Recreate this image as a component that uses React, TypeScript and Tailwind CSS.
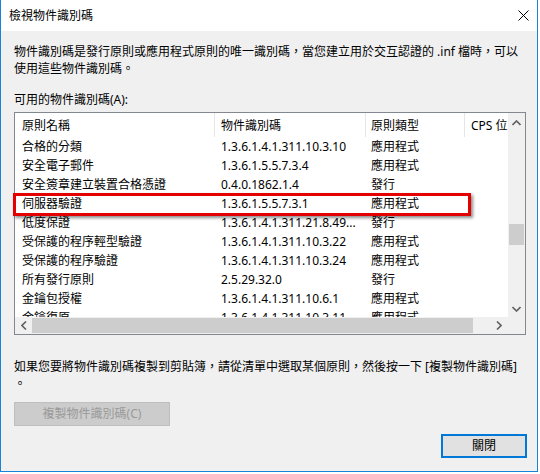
import React from "react";

const rows: [string, string, string][] = [
  ["合格的分類", "1.3.6.1.4.1.311.10.3.10", "應用程式"],
  ["安全電子郵件", "1.3.6.1.5.5.7.3.4", "應用程式"],
  ["安全簽章建立裝置合格憑證", "0.4.0.1862.1.4", "發行"],
  ["伺服器驗證", "1.3.6.1.5.5.7.3.1", "應用程式"],
  ["低度保證", "1.3.6.1.4.1.311.21.8.49...", "發行"],
  ["受保護的程序輕型驗證", "1.3.6.1.4.1.311.10.3.22", "應用程式"],
  ["受保護的程序驗證", "1.3.6.1.4.1.311.10.3.24", "應用程式"],
  ["所有發行原則", "2.5.29.32.0", "發行"],
  ["金鑰包授權", "1.3.6.1.4.1.311.10.6.1", "應用程式"],
  ["金鑰復原", "1.3.6.1.4.1.311.10.3.11", "應用程式"],
];

const Chevron = ({ dir }: { dir: "up" | "down" | "left" | "right" }) => {
  const pts: Record<string, string> = {
    up: "0.5,5 4.5,1 8.5,5",
    down: "0.5,1 4.5,5 8.5,1",
    left: "5,0.5 1,4.5 5,8.5",
    right: "1,0.5 5,4.5 1,8.5",
  };
  const vertical = dir === "up" || dir === "down";
  return (
    <svg width={vertical ? 9 : 6} height={vertical ? 6 : 9} viewBox={vertical ? "0 0 9 6" : "0 0 6 9"}>
      <polyline points={pts[dir]} fill="none" stroke="#606060" strokeWidth="1.6" />
    </svg>
  );
};

export default function App() {
  return (
    <div
      className="w-[540px] h-[474px] bg-white text-black text-[12px]"
      style={{ fontFamily: '"Noto Sans", "Noto Sans CJK TC", sans-serif' }}
    >
      <div className="w-[538px] h-[472px] border-x border-b border-[#1883d7] flex flex-col bg-[#f0f0f0]">
        {/* Title bar */}
        <div className="h-[31px] shrink-0 bg-white flex items-center justify-between pl-[8px] pr-[8px]">
          <span className="leading-[17px]">檢視物件識別碼</span>
          <svg width="11" height="11" viewBox="0 0 11 11">
            <line x1="0.5" y1="0.5" x2="10.5" y2="10.5" stroke="#000" strokeWidth="1" />
            <line x1="10.5" y1="0.5" x2="0.5" y2="10.5" stroke="#000" strokeWidth="1" />
          </svg>
        </div>

        {/* Body */}
        <div className="flex-1 flex flex-col px-[13px] pt-[12px]">
          <div className="leading-[17px] whitespace-nowrap">
            <div>物件識別碼是發行原則或應用程式原則的唯一識別碼，當您建立用於交互認證的 .inf 檔時，可以</div>
            <div>使用這些物件識別碼。</div>
          </div>

          <div className="mt-[14px] leading-[17px]">可用的物件識別碼(A):</div>

          {/* List view */}
          <div className="mt-[4px] w-[512px] h-[223px] border border-[#828790] bg-white relative flex">
            <div className="w-[493px] flex flex-col">
              <div className="h-[204px] overflow-hidden">
                <div className="h-[24px] flex whitespace-nowrap">
                  <div className="w-[200px] shrink-0 border-r border-[#e5e5e5] pl-[7px] pt-[3px] leading-[20px]">原則名稱</div>
                  <div className="w-[151px] shrink-0 border-r border-[#e5e5e5] pl-[6px] pt-[3px] leading-[20px]">物件識別碼</div>
                  <div className="w-[99px] shrink-0 border-r border-[#e5e5e5] pl-[5px] pt-[3px] leading-[20px]">原則類型</div>
                  <div className="flex-1 pl-[6px] pt-[3px] leading-[20px] overflow-hidden">CPS 位</div>
                </div>
                {rows.map((r, i) => (
                  <div key={i} className="h-[19px] flex whitespace-nowrap leading-[19px]">
                    <div className="w-[200px] shrink-0 pl-[7px]">{r[0]}</div>
                    <div className="w-[151px] shrink-0 pl-[6px]">{r[1]}</div>
                    <div className="w-[99px] shrink-0 pl-[5px]">{r[2]}</div>
                    <div className="flex-1" />
                  </div>
                ))}
              </div>
              {/* Horizontal scrollbar */}
              <div className="h-[17px] bg-[#f0f0f0] flex items-center">
                <div className="w-[17px] h-[17px] flex items-center justify-center">
                  <Chevron dir="left" />
                </div>
                <div className="w-[441px] h-[15px] bg-[#cdcdcd]" />
                <div className="flex-1 h-[17px] flex items-center justify-end pr-[6px]">
                  <Chevron dir="right" />
                </div>
              </div>
            </div>
            {/* Vertical scrollbar */}
            <div className="w-[17px] flex flex-col">
              <div className="h-[204px] bg-[#f0f0f0] flex flex-col">
                <div className="h-[19px] flex items-center justify-center pt-[1px]">
                  <Chevron dir="up" />
                </div>
                <div className="mt-[92px] ml-[1px] w-[15px] h-[21px] bg-[#cdcdcd]" />
                <div className="flex-1" />
                <div className="h-[17px] flex items-center justify-center">
                  <Chevron dir="down" />
                </div>
              </div>
              <div className="h-[17px] bg-[#f0f0f0]" />
            </div>

            {/* Red highlight annotation */}
            <div className="absolute left-[-2px] top-[80px] w-[458px] h-[23px] border-[3px] border-[#e50000] shadow-[2px_2px_3px_rgba(0,0,0,0.45)]" />
          </div>

          <div className="mt-[23px] leading-[17px] whitespace-nowrap">
            <div>如果您要將物件識別碼複製到剪貼簿，請從清單中選取某個原則，然後按一下 [複製物件識別碼]</div>
            <div>。</div>
          </div>

          <div className="mt-[10px] w-[156px] h-[24px] bg-[#cccccc] border border-[#bfbfbf] flex items-center justify-center text-[#9a9a9a]">
            複製物件識別碼(C)
          </div>

          <div className="mt-[8px] self-end mr-[-3px] w-[86px] h-[24px] bg-[#e1e1e1] border-2 border-[#0078d7] flex items-center justify-center">
            關閉
          </div>
        </div>
      </div>
    </div>
  );
}
